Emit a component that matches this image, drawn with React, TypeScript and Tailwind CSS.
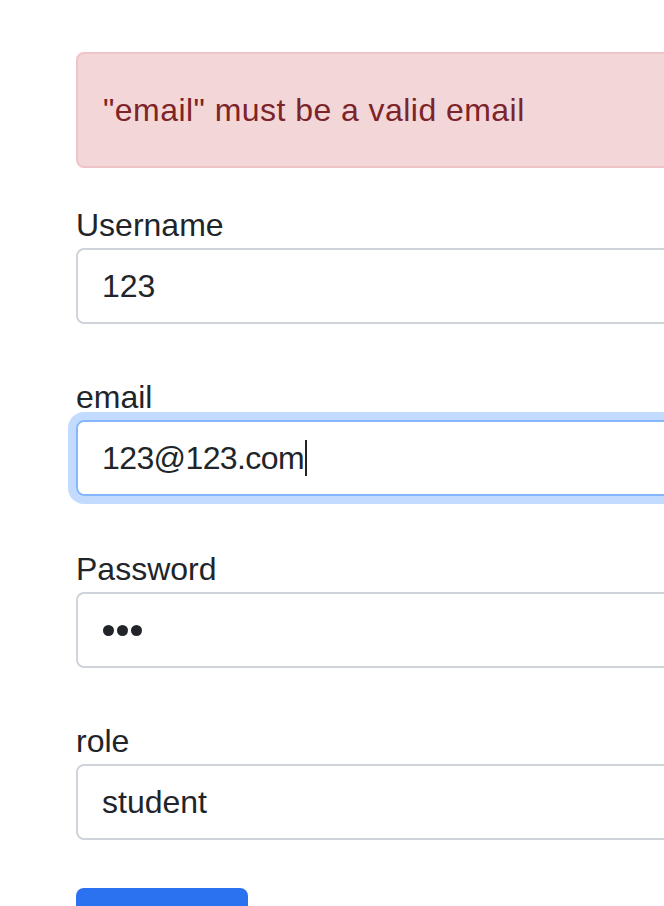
export default function App() {
  return (
    <div className="w-[664px] h-[906px] overflow-hidden bg-white font-['Liberation_Sans',Arial,sans-serif] text-[#212529]">
      <div className="w-[800px] pl-[76px] pt-[52px]">
        <div className="h-[116px] flex items-center pl-[25px] bg-[#f3d6d8] border-2 border-[#efc4c7] rounded-[8px] text-[#7c2429] text-[32px] tracking-[0.45px] mb-[34px]">
          "email" must be a valid email
        </div>

        <Field label="Username">
          <Box>123</Box>
        </Field>

        <Field label="email">
          <Box focused>
            <span className="tracking-[-0.6px]">123@123.com</span>
            <span className="inline-block w-[2px] h-[36px] bg-[#212529] ml-[1px]" />
          </Box>
        </Field>

        <Field label="Password">
          <Box>
            <span className="flex gap-[3px] pl-[1px]">
              <span className="w-[11px] h-[11px] rounded-full bg-[#212529]" />
              <span className="w-[11px] h-[11px] rounded-full bg-[#212529]" />
              <span className="w-[11px] h-[11px] rounded-full bg-[#212529]" />
            </span>
          </Box>
        </Field>

        <Field label="role" last>
          <Box>student</Box>
        </Field>

        <button aria-label="Submit" className="block w-[172px] h-[76px] rounded-[8px] bg-[#2a72ef]" />
      </div>
    </div>
  );
}

function Field({ label, last, children }: { label: string; last?: boolean; children: React.ReactNode }) {
  return (
    <div className={last ? "mb-[48px]" : "mb-[50px]"}>
      <label className="block text-[32px] leading-[46px] h-[46px]">{label}</label>
      {children}
    </div>
  );
}

function Box({ focused, children }: { focused?: boolean; children: React.ReactNode }) {
  return (
    <div
      className={
        focused
          ? "h-[76px] flex items-center pl-[24px] border-2 border-[#86b7fe] rounded-[8px] text-[32px] shadow-[0_0_0_8px_rgba(13,110,253,0.25)]"
          : "h-[76px] flex items-center pl-[24px] border-2 border-[#ced4da] rounded-[8px] text-[32px]"
      }
    >
      {children}
    </div>
  );
}
